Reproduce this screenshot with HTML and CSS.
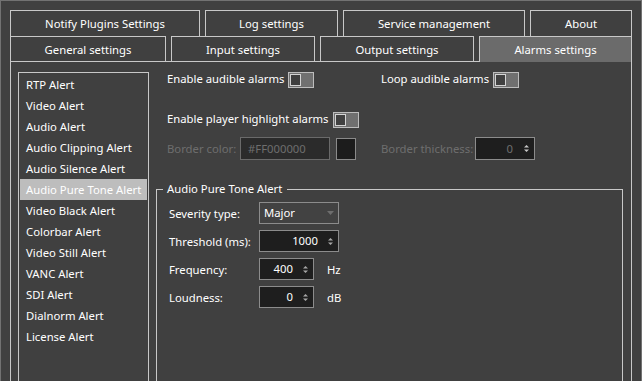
FILE: index.html
```html
<!DOCTYPE html>
<html>
<head>
<meta charset="utf-8">
<link rel="stylesheet" href="styles.css">
</head>
<body>
<div class="window">
  <div class="tabrow row1">
    <div class="tab t-notify">Notify Plugins Settings</div>
    <div class="tab t-log">Log settings</div>
    <div class="tab t-service">Service management</div>
    <div class="tab t-about">About</div>
  </div>
  <div class="tabrow row2">
    <div class="tab t-general">General settings</div>
    <div class="tab t-input">Input settings</div>
    <div class="tab t-output">Output settings</div>
    <div class="tab t-alarms selected">Alarms settings</div>
  </div>
  <div class="pane">
    <div class="list">
      <div class="item">RTP Alert</div>
      <div class="item">Video Alert</div>
      <div class="item">Audio Alert</div>
      <div class="item">Audio Clipping Alert</div>
      <div class="item">Audio Silence Alert</div>
      <div class="item active">Audio Pure Tone Alert</div>
      <div class="item">Video Black Alert</div>
      <div class="item">Colorbar Alert</div>
      <div class="item">Video Still Alert</div>
      <div class="item">VANC Alert</div>
      <div class="item">SDI Alert</div>
      <div class="item">Dialnorm Alert</div>
      <div class="item">License Alert</div>
    </div>
    <div class="main">
      <div class="line line1">
        <div class="opt opt-first"><span class="otext">Enable audible alarms</span><span class="toggle"><span class="knob"></span></span></div>
        <div class="opt"><span class="otext">Loop audible alarms</span><span class="toggle"><span class="knob"></span></span></div>
      </div>
      <div class="line line2">
        <div class="opt"><span class="otext">Enable player highlight alarms</span><span class="toggle"><span class="knob"></span></span></div>
      </div>
      <div class="line line3">
        <span class="dlabel lbl-color">Border color:</span>
        <span class="dinput">#FF000000</span>
        <span class="swatch"></span>
        <span class="dlabel lbl-thick">Border thickness:</span>
        <span class="spin dspin w-thick"><span class="val">0</span><span class="arr"><svg width="7" height="11" viewBox="0 0 7 11"><polygon points="1,4.5 3.5,2 6,4.5" class="arrfill"/><polygon points="1,6.5 3.5,9 6,6.5" class="arrfill"/></svg></span></span>
      </div>
      <fieldset class="group">
        <legend>Audio Pure Tone Alert</legend>
        <div class="frow">
          <span class="flabel">Severity type:</span>
          <span class="combo"><span class="ctext">Major</span><svg class="carr" width="7" height="4" viewBox="0 0 7 4"><polygon points="0,0 7,0 3.5,4" fill="#6e6e6e"/></svg></span>
        </div>
        <div class="frow">
          <span class="flabel">Threshold (ms):</span>
          <span class="spin w-wide"><span class="val">1000</span><span class="arr"><svg width="7" height="11" viewBox="0 0 7 11"><polygon points="1,4.5 3.5,2 6,4.5" class="arrfill"/><polygon points="1,6.5 3.5,9 6,6.5" class="arrfill"/></svg></span></span>
        </div>
        <div class="frow">
          <span class="flabel">Frequency:</span>
          <span class="spin w-narrow"><span class="val">400</span><span class="arr"><svg width="7" height="11" viewBox="0 0 7 11"><polygon points="1,4.5 3.5,2 6,4.5" class="arrfill"/><polygon points="1,6.5 3.5,9 6,6.5" class="arrfill"/></svg></span></span>
          <span class="unit">Hz</span>
        </div>
        <div class="frow">
          <span class="flabel">Loudness:</span>
          <span class="spin w-narrow"><span class="val">0</span><span class="arr"><svg width="7" height="11" viewBox="0 0 7 11"><polygon points="1,4.5 3.5,2 6,4.5" class="arrfill"/><polygon points="1,6.5 3.5,9 6,6.5" class="arrfill"/></svg></span></span>
          <span class="unit">dB</span>
        </div>
      </fieldset>
    </div>
  </div>
</div>
</body>
</html>
```

FILE: styles.css
```css
* { box-sizing: border-box; }
html, body { margin: 0; padding: 0; background: #404040; }
body {
  font-family: "Noto Sans", "Open Sans", sans-serif;
  font-size: 11.3px;
  color: #ffffff;
}
.window {
  width: 642px;
  height: 381px;
  overflow: hidden;
  background: #404040;
  border: 1px solid #727272;
  border-bottom: none;
  padding: 9px 9px 0 9px;
}
.tabrow { display: flex; gap: 5px; }
.tab {
  border: 1px solid #c8c8c8;
  border-bottom: none;
  text-align: center;
  white-space: nowrap;
}
.row1 .tab { height: 26px; line-height: 26px; }
.row2 .tab { height: 25px; line-height: 25px; }
.t-notify { width: 190px; }
.t-log { width: 133px; }
.t-service { width: 182px; }
.t-about { width: 102px; }
.t-general { width: 156px; }
.t-input { width: 144px; }
.t-output { width: 154px; }
.t-alarms { width: 153px; }
.tab.selected {
  background: #6b6b6b;
  height: 26px;
  margin-bottom: -1px;
  position: relative;
  z-index: 1;
}
.pane {
  display: flex;
  height: 340px;
  border: 1px solid #c8c8c8;
  border-bottom: none;
  padding: 10px 8px 0 7px;
}
.list {
  width: 131px;
  flex: none;
  height: 400px;
  border: 1px solid #c8c8c8;
  border-bottom: none;
  padding: 1px;
}
.item {
  height: 21px;
  line-height: 21px;
  padding-left: 6px;
  white-space: nowrap;
}
.item.active { background: #bdbdbd; }
.main {
  width: 467px;
  flex: none;
  margin-left: 7px;
}
.line { display: flex; padding-left: 11px; }
.line1 { height: 16px; }
.line2 { height: 16px; margin-top: 24px; }
.line3 { height: 23px; margin-top: 9px; align-items: center; }
.opt { display: flex; align-items: center; white-space: nowrap; height: 16px; }
.otext { line-height: 16px; padding-bottom: 2px; }
.opt-first { width: 214px; }
.toggle {
  display: inline-block;
  width: 26px;
  height: 16px;
  margin-left: 4px;
  border: 1px solid #bdbdbd;
  background: #707070;
  padding: 1px;
}
.knob {
  display: block;
  width: 11px;
  height: 12px;
  border: 1px solid #d4d4d4;
  background: #404040;
}
.dlabel { color: #6e6e6e; white-space: nowrap; }
.lbl-color { width: 73px; }
.lbl-thick { width: 94px; margin-left: 25px; }
.dinput {
  width: 90px;
  height: 23px;
  line-height: 21px;
  border: 1px solid #6a6a6a;
  background: #2b2b2b;
  color: #6e6e6e;
  padding-left: 7px;
}
.swatch {
  width: 20px;
  height: 22px;
  margin-left: 6px;
  margin-top: 1px;
  border: 1px solid #8a8a8a;
  background: #1c1c1c;
}
.spin {
  display: flex;
  height: 22px;
  border: 1px solid #8c8c8c;
  background: #1e1e1e;
}
.spin .val {
  flex: 1;
  text-align: right;
  line-height: 20px;
  padding-right: 4px;
}
.spin .arr {
  width: 16px;
  display: flex;
  align-items: center;
  justify-content: center;
}
.arrfill { fill: #a8a8a8; }
.dspin { height: 23px; }
.dspin .val { color: #6e6e6e; line-height: 21px; padding-right: 5px; }
.dspin .arrfill { fill: #c8c8c8; }
.w-thick { width: 60px; }
.w-wide { width: 80px; }
.w-narrow { width: 55px; }
.group {
  margin: 21px 0 0 0;
  width: 467px;
  height: 300px;
  border: 1px solid #c8c8c8;
  padding: 5px 0 0 6px;
  min-width: 0;
}
.group legend {
  padding: 0 5px 0 4px;
  line-height: 16px;
  margin-left: 0;
}
.frow {
  display: flex;
  align-items: center;
  height: 22px;
  margin: 0 0 6px 6px;
}
.flabel { width: 90px; white-space: nowrap; }
.combo {
  width: 80px;
  height: 22px;
  border: 1px solid #8c8c8c;
  background: #424242;
  display: flex;
  align-items: center;
  justify-content: space-between;
  padding: 0 4px 0 4px;
}
.ctext { line-height: 20px; }
.carr { margin-right: 0; }
.unit { margin-left: 13px; }
```
